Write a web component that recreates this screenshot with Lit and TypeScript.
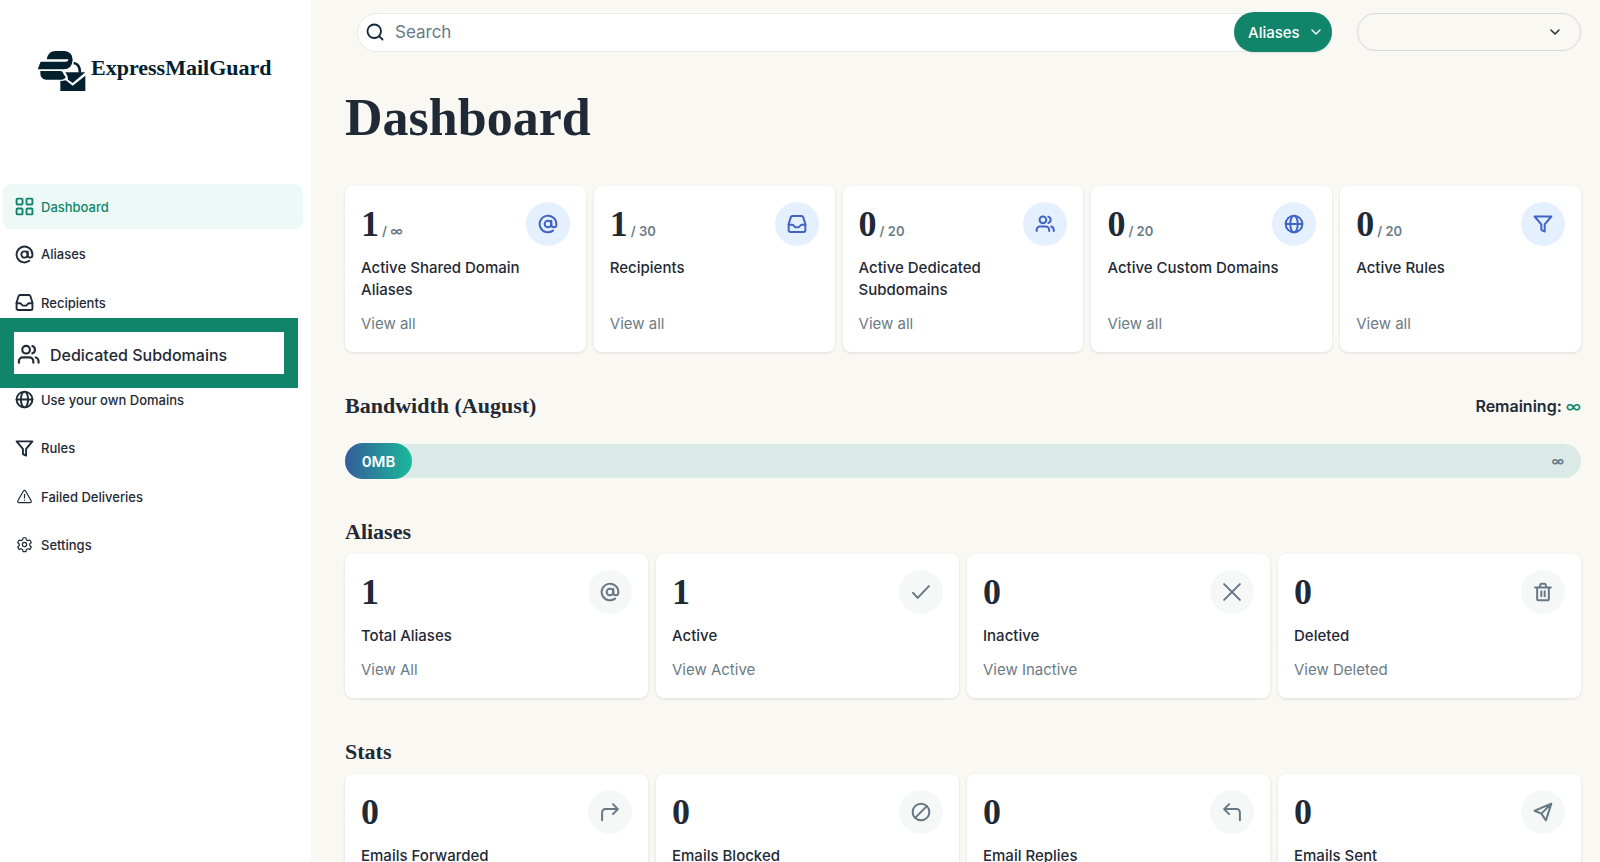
import { LitElement, html, css, svg, nothing, type SVGTemplateResult } from "lit";
import { customElement, property } from "lit/decorators.js";
import { classMap } from "lit/directives/class-map.js";

const icons: Record<string, SVGTemplateResult> = {
  grid: svg`<rect x="2" y="2" width="7.500" height="7.500" rx="1.2"/><rect x="14.500" y="2" width="7.500" height="7.500" rx="1.2"/><rect x="2" y="14.500" width="7.500" height="7.500" rx="1.2"/><rect x="14.500" y="14.500" width="7.500" height="7.500" rx="1.2"/>`,
  at: svg`<circle cx="12" cy="12" r="4"/><path d="M16 8v5a3 3 0 0 0 6 0v-1a10 10 0 1 0-4 8"/>`,
  inbox: svg`<path d="M2 13h4.5c1 0 1.4.7 1.9 1.5S9.500 16 10.500 16h3c1 0 1.600-.7 2.100-1.500S16.500 13 17.500 13H22"/><path d="M6.500 2.500h11a2 2 0 0 1 1.900 1.300L22 12v7.500a2 2 0 0 1-2 2H4a2 2 0 0 1-2-2V12l2.600-8.200a2 2 0 0 1 1.900-1.300z"/>`,
  users: svg`<circle cx="9.500" cy="7" r="4"/><path d="M2 20.500V19a4 4 0 0 1 4-4h7a4 4 0 0 1 4 4v1.500M16 3.200a4 4 0 0 1 0 7.600M22.500 20.500V19a4.500 4.500 0 0 0-3-4"/>`,
  globe: svg`<circle cx="12" cy="12" r="10"/><ellipse cx="12" cy="12" rx="4.500" ry="10"/><path d="M2 12h20"/>`,
  filter: svg`<path d="M22 3H2l8 9.500V19l4 2v-8.500z"/>`,
  warning: svg`<path d="M10.500 4.200 2.600 18a1.700 1.700 0 0 0 1.500 2.600h15.800a1.700 1.700 0 0 0 1.500-2.600L13.500 4.200a1.700 1.700 0 0 0-3 0zM12 9v5M12 17v.3"/>`,
  gear: svg`<circle cx="12" cy="12" r="3"/><path d="M10 2.500h4l.7 2.900 2 1.200 2.900-.9 2 3.500-2.200 2v2.200l2.200 2-2 3.500-2.900-.9-2 1.200-.7 2.800h-4l-.7-2.800-2-1.200-2.900.9-2-3.500 2.200-2v-2.200l-2.200-2 2-3.500 2.900.9 2-1.200z"/>`,
  search: svg`<circle cx="11" cy="11" r="9"/><path d="m17.500 17.500 4.500 4.500"/>`,
  chevron: svg`<path d="m4 8 8 8 8-8"/>`,
  check: svg`<path d="m2.500 13 5.500 6L21.500 5"/>`,
  cross: svg`<path d="m2.500 2.500 19 19M21.500 2.500l-19 19"/>`,
  trash: svg`<path d="M2.500 6.500h19M5 6.500V20a2 2 0 0 0 2 2h10a2 2 0 0 0 2-2V6.500M8 6.500 8.500 4a2 2 0 0 1 2-1.800h3a2 2 0 0 1 2 1.800l.5 2.500M10 11v6M14 11v6"/>`,
  forward: svg`<path d="M2.500 22v-9.500a4 4 0 0 1 4-4H21M15.500 2.500l6 6-6 6"/>`,
  blocked: svg`<circle cx="12" cy="12" r="10"/><path d="M5 19 19 5"/>`,
  reply: svg`<path d="M21.500 22v-9.500a4 4 0 0 0-4-4H3M8.500 2.500l-6 6 6 6"/>`,
  send: svg`<path d="M22 2 2 10.500l8 3.500zM22 2l-6.500 20L10 14zM22 2 10 14"/>`,
};

const icon = (name: string, cls: string) =>
  html`<svg class=${cls} viewBox="0 0 24 24" aria-hidden="true">${icons[name]}</svg>`;

const shared = css`
  :host { display: block; }
  * { box-sizing: border-box; }
  svg { display: block; flex: none; fill: none; stroke: currentColor; stroke-width: 2.4; stroke-linecap: round; stroke-linejoin: round; }
  a { color: inherit; text-decoration: none; }
`;

@customElement("stat-card")
class StatCard extends LitElement {
  @property() count = "";
  @property() limit = "";
  @property() label = "";
  @property() link = "";
  @property() icon = "";
  @property({ type: Boolean }) accent = false;

  static styles = [shared, css`
    .card { display: flex; flex-direction: column; height: 100%; padding: 16px 16px 17px; background: #fff; border-radius: 8px; box-shadow: 0 1px 3px rgba(31, 41, 55, 0.12); font-size: 15px; line-height: 22px; }
    .top { display: flex; justify-content: space-between; height: 44px; }
    .figures { display: flex; align-items: baseline; gap: 3px; font-family: "Liberation Serif", serif; font-weight: 700; font-size: 36px; line-height: 44px; }
    .limit { font-family: Inter, sans-serif; font-size: 13px; font-weight: 600; color: #6b7b86; }
    .badge { display: grid; place-items: center; width: 44px; height: 44px; border-radius: 50%; background: #f6f8f8; color: #667885; }
    .badge.accent { background: #e5f0ff; color: #4263c4; }
    .glyph { width: 20px; height: 20px; }
    .label { margin: 11px 0 12px; font-weight: 500; }
    .link { margin-top: auto; color: #6b7b86; }
  `];

  render() {
    return html`<article class="card">
      <div class="top">
        <div class="figures"><span>${this.count}</span>${this.limit ? html`<span class="limit">/ ${this.limit}</span>` : nothing}</div>
        <span class=${classMap({ badge: true, accent: this.accent })}>${icon(this.icon, "glyph")}</span>
      </div>
      <div class="label">${this.label}</div>
      ${this.link ? html`<a class="link" href="#">${this.link}</a>` : nothing}
    </article>`;
  }
}

const nav = [
  ["grid", "Dashboard", "active"], ["at", "Aliases", ""], ["inbox", "Recipients", ""],
  ["users", "Dedicated Subdomains", "spotlight"], ["globe", "Use your own Domains", ""],
  ["filter", "Rules", ""], ["warning", "Failed Deliveries", "thin"], ["gear", "Settings", "thin"],
];

const limits = [
  ["1", "∞", "Active Shared Domain Aliases", "at"], ["1", "30", "Recipients", "inbox"],
  ["0", "20", "Active Dedicated Subdomains", "users"], ["0", "20", "Active Custom Domains", "globe"],
  ["0", "20", "Active Rules", "filter"],
];

const aliases = [
  ["1", "Total Aliases", "View All", "at"], ["1", "Active", "View Active", "check"],
  ["0", "Inactive", "View Inactive", "cross"], ["0", "Deleted", "View Deleted", "trash"],
];

const stats = [
  ["0", "Emails Forwarded", "", "forward"], ["0", "Emails Blocked", "", "blocked"],
  ["0", "Email Replies", "", "reply"], ["0", "Emails Sent", "", "send"],
];

@customElement("app-root")
class AppRoot extends LitElement {
  static styles = [shared, css`
    :host { height: 100vh; overflow: hidden; background: #f9f8f3; color: #1f2a36; font-family: Inter, sans-serif; }
    .layout { display: grid; grid-template-columns: 311px minmax(0, 1fr); height: 100%; }
    .side { background: #fff; }
    .brand { display: flex; align-items: center; gap: 4px; height: 42px; margin: 50px 0 92px 37px; color: #03202f; font: 700 22px/36px "Liberation Serif", serif; }
    .brand .name { padding-bottom: 6px; }
    .logo { width: 50px; height: 42px; fill: currentColor; stroke: none; }
    .logo .arc { fill: none; stroke: currentColor; stroke-width: 8; stroke-linecap: butt; }
    .menu { display: flex; flex-direction: column; justify-content: space-between; height: 384px; margin: 0; padding: 0 8px 0 3px; list-style: none; }
    .entry { position: relative; height: 45px; }
    .item { display: flex; align-items: center; gap: 7px; height: 44px; padding: 0 12px; border-radius: 8px; font-size: 13px; font-weight: 500; }
    .item.active { height: 45px; background: #edf9f7; color: #10856a; }
    .item .glyph { width: 19px; height: 19px; }
    .item.thin .glyph { padding: 1px; stroke-width: 1.7; }
    .item.spotlight { position: absolute; top: -11px; left: -3px; z-index: 1; width: 298px; height: 70px; gap: 10px; padding: 3px 3px 0; border: 14px solid #10856a; border-radius: 0; background: #fff; font-size: 16px; white-space: nowrap; }
    .item.spotlight .glyph { width: 23px; height: 23px; stroke-width: 2.2; }
    .main { overflow-y: auto; scrollbar-width: none; padding: 12px 19px 24px 34px; }
    .header { display: flex; gap: 25px; height: 40px; padding-left: 12px; align-items: center; }
    .search { display: flex; align-items: center; flex: 1; height: 39px; padding-left: 8px; border: 1px solid #e8ebe5; border-radius: 20px; background: #fff; }
    .search .query-icon { width: 18px; height: 18px; color: #10263a; }
    .query { flex: 1; min-width: 0; padding: 0 11px; border: 0; outline: 0; background: none; font: 400 17px/24px Inter, sans-serif; color: inherit; }
    .query::placeholder { color: #697a86; opacity: 1; }
    .pick { display: grid; align-items: center; }
    .pick select, .pick .caret { grid-area: 1 / 1; }
    .pick select { appearance: none; width: 100%; margin: 0; outline: 0; font: 500 15px/20px Inter, sans-serif; color: inherit; }
    .pick .caret { justify-self: end; width: 12px; height: 12px; pointer-events: none; stroke-width: 3; }
    .scope { width: 98px; margin-right: -1px; color: #fff; }
    .scope select { height: 40px; padding: 2px 14px 0; border: 0; border-radius: 20px; background: #10856a; box-shadow: 0 1px 2px rgba(31, 41, 55, 0.12); }
    .scope .caret { margin-right: 10px; }
    .account { width: 224px; }
    .account select { height: 38px; border: 1px solid #d3d9db; border-radius: 19px; background: transparent; }
    .account .caret { margin-right: 20px; }
    .title { margin: 34px 0 36px; font: 700 52px/64px "Liberation Serif", serif; }
    .heading { margin: 0; font: 700 22px/28px "Liberation Serif", serif; }
    .five, .four { display: grid; gap: 8px; }
    .five { grid-template-columns: repeat(5, minmax(0, 1fr)); }
    .four { grid-template-columns: repeat(4, minmax(0, 1fr)); }
    .usage { display: flex; align-items: center; justify-content: space-between; margin: 40px 0 24px; }
    .remaining { font-size: 16px; font-weight: 600; line-height: 28px; }
    .endless { color: #10856a; font-weight: 500; }
    .track { display: flex; align-items: center; justify-content: space-between; height: 34px; padding-right: 17px; border-radius: 17px; background: #dceae7; color: #667885; font-size: 13px; font-weight: 600; }
    .fill { display: grid; place-items: center; width: 67px; height: 36px; margin: -1px 0; border-radius: 18px; background: linear-gradient(90deg, #355c9b, #1ab99b); color: #fff; font-size: 15px; }
    .group { margin-top: 40px; }
    .group .heading { margin-bottom: 8px; }
  `];

  private cards(rows: string[][]) {
    return html`<div class="four">${rows.map(([count, label, link, glyph]) => html`
      <stat-card .count=${count} .label=${label} .link=${link} .icon=${glyph}></stat-card>`)}</div>`;
  }

  render() {
    return html`<div class="layout">
      <aside class="side">
        <a class="brand" href="#">
          <svg class="logo" viewBox="110 58 150 126" aria-hidden="true">
            <path d="M139 86Q144 61 165 61H194Q217 64 217 88Q215 116 190 116H112L121 93H196Q204 93 204 86Z"/>
            <path d="M120 121H182Q188 122 190 131L196 139Q193 147 182 147H137Q118 146 120 121Z"/>
            <path class="arc" d="M220 97Q239 100 239 126"/>
            <path d="M195 125H255L217 157L203 147Q203 135 195 125ZM180 151Q190 151 196 149L217 165L255 135V181H180Z"/>
          </svg>
          <span class="name">ExpressMailGuard</span>
        </a>
        <nav aria-label="Main"><ul class="menu">${nav.map(([glyph, text, state]) => html`
          <li class="entry"><a class="item ${state}" href="#">${icon(glyph, "glyph")}<span>${text}</span></a></li>`)}
        </ul></nav>
      </aside>
      <main class="main">
        <header class="header">
          <div class="search">
            ${icon("search", "query-icon")}
            <input class="query" type="search" placeholder="Search" aria-label="Search">
            <div class="pick scope"><select aria-label="Search in"><option>Aliases</option></select>${icon("chevron", "caret")}</div>
          </div>
          <div class="pick account"><select aria-label="Account"><option></option></select>${icon("chevron", "caret")}</div>
        </header>
        <h1 class="title">Dashboard</h1>
        <div class="five">${limits.map(([count, limit, label, glyph]) => html`
          <stat-card accent .count=${count} .limit=${limit} .label=${label} .link=${"View all"} .icon=${glyph}></stat-card>`)}
        </div>
        <section>
          <div class="usage">
            <h2 class="heading">Bandwidth (August)</h2>
            <div class="remaining">Remaining: <span class="endless">∞</span></div>
          </div>
          <div class="track"><span class="fill">0MB</span><span>∞</span></div>
        </section>
        <section class="group"><h2 class="heading">Aliases</h2>${this.cards(aliases)}</section>
        <section class="group"><h2 class="heading">Stats</h2>${this.cards(stats)}</section>
      </main>
    </div>`;
  }
}
